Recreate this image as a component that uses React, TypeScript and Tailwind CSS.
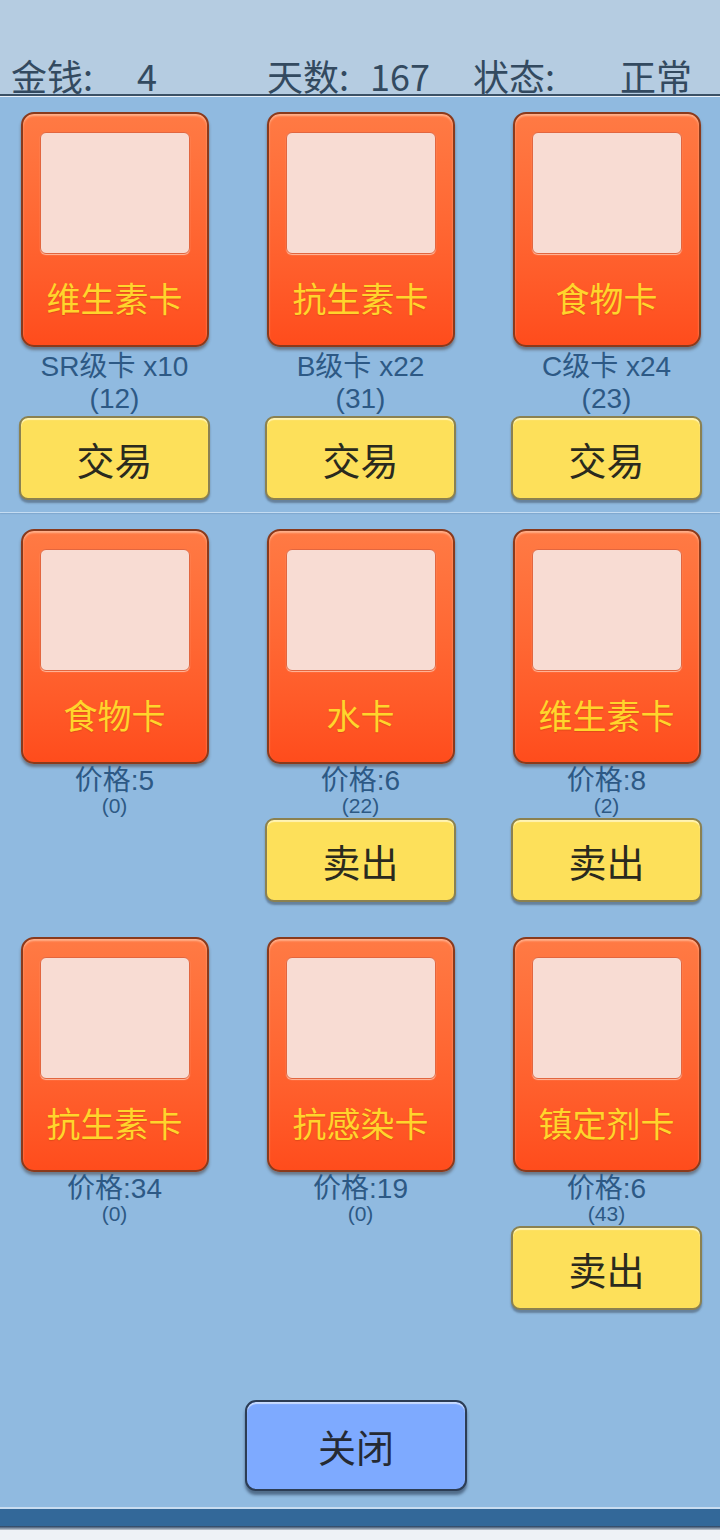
import React from "react";

type Item = {
  name: string;
  line1: string;
  line2: string;
  action?: string;
};

const TOP: Item[] = [
  { name: "维生素卡", line1: "SR级卡 x10", line2: "(12)", action: "交易" },
  { name: "抗生素卡", line1: "B级卡 x22", line2: "(31)", action: "交易" },
  { name: "食物卡", line1: "C级卡 x24", line2: "(23)", action: "交易" },
];

const SELL: Item[][] = [
  [
    { name: "食物卡", line1: "价格:5", line2: "(0)" },
    { name: "水卡", line1: "价格:6", line2: "(22)", action: "卖出" },
    { name: "维生素卡", line1: "价格:8", line2: "(2)", action: "卖出" },
  ],
  [
    { name: "抗生素卡", line1: "价格:34", line2: "(0)" },
    { name: "抗感染卡", line1: "价格:19", line2: "(0)" },
    { name: "镇定剂卡", line1: "价格:6", line2: "(43)", action: "卖出" },
  ],
];

const font = { fontFamily: '"Liberation Sans", "Noto Sans CJK SC", sans-serif' };
const cjk = { fontFamily: '"Noto Sans CJK SC", "Noto Sans", sans-serif' };

function Card({ name }: { name: string }) {
  return (
    <div className="w-[188px] h-[235px] rounded-[13px] border-2 border-[#8a3a1c] bg-gradient-to-b from-[#ff7a44] via-[#ff6632] to-[#ff4c1c] shadow-[0_3px_3px_rgba(60,40,30,0.45),inset_0_2px_2px_rgba(255,200,170,0.7)] flex flex-col items-center pt-[18px]">
      <div className="w-[150px] h-[122px] rounded-[6px] border border-[#e2663f] bg-[#f8dcd3] shadow-[0_1px_1px_rgba(255,210,190,0.8)]" />
      <div
        className="mt-[24px] text-[34px] leading-[40px] text-[#ffd52c] [text-shadow:0_1px_1px_rgba(170,60,10,0.35)]"
        style={cjk}
      >
        {name}
      </div>
    </div>
  );
}

function ActionButton({ label }: { label: string }) {
  return (
    <div
      className="w-[191px] h-[84px] rounded-[9px] border-2 border-[#8b8150] bg-[#fde05a] shadow-[0_3px_2px_rgba(50,60,70,0.45),inset_0_2px_1px_rgba(255,245,190,0.9)] flex items-center justify-center text-[38px] text-[#2a2a1e]"
      style={cjk}
    >
      {label}
    </div>
  );
}

function Column({ item, top }: { item: Item; top: boolean }) {
  return (
    <div className="w-[191px] flex flex-col items-center">
      <Card name={item.name} />
      {top ? (
        <div className="pt-[4px] flex flex-col items-center text-[#2d5985] text-[28px] leading-[32px]" style={font}>
          <div>{item.line1}</div>
          <div>{item.line2}</div>
        </div>
      ) : (
        <div className="pt-[2px] pb-[1px] flex flex-col items-center text-[#2d5985]" style={font}>
          <div className="text-[28px] leading-[30px]">{item.line1}</div>
          <div className="text-[21px] leading-[20px]">{item.line2}</div>
        </div>
      )}
      <div className="mt-[1px] h-[84px]">{item.action ? <ActionButton label={item.action} /> : null}</div>
    </div>
  );
}

export default function App() {
  return (
    <div className="w-[720px] h-[1540px] overflow-hidden bg-[#eef2f6] flex flex-col">
      <div className="h-[94px] bg-[#b5cce1] overflow-hidden flex items-end text-[36px] leading-[36px] text-[#334a60]" style={cjk}>
        <div className="relative w-full h-[37px]">
          <span className="absolute left-[11px]">金钱:</span>
          <span className="absolute left-[137px]">4</span>
          <span className="absolute left-[267px]">天数:</span>
          <span className="absolute left-[370px]">167</span>
          <span className="absolute left-[473px]">状态:</span>
          <span className="absolute left-[620px]">正常</span>
        </div>
      </div>
      <div className="h-[2px] bg-[#3b5166]" />
      <div className="h-[1px] bg-[#e8f0f8]" />
      <div className="bg-[#90bae0] flex-1 flex flex-col">
        <div className="pt-[15px] pl-[19px] pr-[18px] flex justify-between">
          {TOP.map((it) => (
            <Column key={it.name} item={it} top />
          ))}
        </div>
        <div className="mt-[12px] h-[1px] bg-[#c4dcf2] shadow-[0_1px_1px_rgba(80,120,160,0.3)]" />
        <div className="pt-[16px] pl-[19px] pr-[18px] flex flex-col gap-[35px]">
          {SELL.map((row, i) => (
            <div key={i} className="flex justify-between">
              {row.map((it) => (
                <Column key={it.name} item={it} top={false} />
              ))}
            </div>
          ))}
        </div>
        <div className="mt-[90px] flex justify-center pr-[8px]">
          <div
            className="w-[222px] h-[91px] rounded-[11px] border-2 border-[#2c3d55] bg-[#7eaaff] shadow-[0_4px_3px_rgba(30,45,70,0.55),inset_0_2px_1px_rgba(210,225,255,0.9)] flex items-center justify-center text-[38px] text-[#252a33]"
            style={cjk}
          >
            关闭
          </div>
        </div>
        <div className="mt-[16px] h-[2px] bg-[#c8dcf0]" />
        <div className="h-[17px] bg-[#336899]" />
        <div className="h-[4px] bg-gradient-to-b from-[#253f5e] to-[#c6ccd4]" />
        <div className="flex-1 bg-[#eef2f6]" />
      </div>
    </div>
  );
}
